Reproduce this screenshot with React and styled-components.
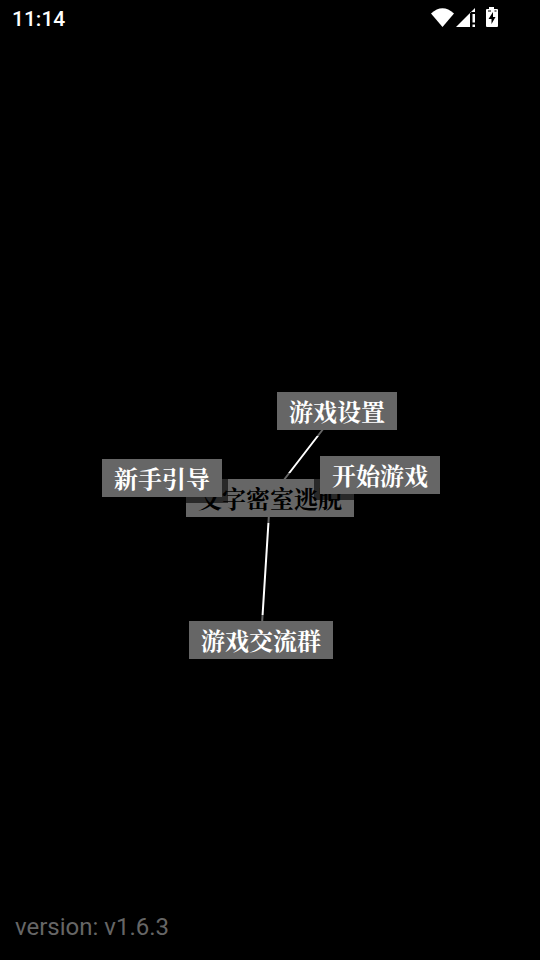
import React from 'react';
import styled, { createGlobalStyle } from 'styled-components';

const GlobalStyle = createGlobalStyle`
    body {
        margin: 0;
        background: #000;
        color: #fff;
        font-family: Roboto, "Noto Sans CJK SC", sans-serif;
    }
`;

const Screen = styled.div`
    min-height: 100vh;
    display: flex;
    flex-direction: column;
`;

const StatusBar = styled.header`
    display: flex;
    align-items: center;
    justify-content: space-between;
    height: 36px;
    padding: 0 40px 0 12px;
`;

const Clock = styled.time`
    padding-top: 2px;
    font-size: 21px;
    font-weight: 500;
    line-height: 36px;
`;

const StatusIcons = styled.svg`
    display: block;
    width: 70px;
    height: 22px;
`;

const Stage = styled.main`
    flex: 1;
    display: flex;
    align-items: center;
    justify-content: center;
    padding-top: 104px;
`;

const NodeMap = styled.div`
    position: relative;
    width: 340px;
    height: 270px;
`;

const Links = styled.svg`
    position: absolute;
    inset: 0;
    width: 100%;
    height: 100%;
`;

const nodeBox = `
    position: absolute;
    box-sizing: border-box;
    height: 38px;
    margin: 0;
    padding: 0 12px;
    border: 0;
    background: #666;
    box-shadow: 0 0 0 6px rgba(0, 0, 0, .6);
    font-family: "Noto Serif CJK SC", "Noto Sans CJK SC", sans-serif;
    font-size: 24px;
    font-weight: 700;
    line-height: 38px;
    white-space: nowrap;
`;

const Title = styled.h1`
    ${nodeBox}
    left: ${({ $x }) => $x}px;
    top: ${({ $y }) => $y}px;
    color: #000;
`;

const NodeButton = styled.button`
    ${nodeBox}
    left: ${({ $x }) => $x}px;
    top: ${({ $y }) => $y}px;
    color: #fff;
    cursor: pointer;
`;

const Version = styled.footer`
    padding: 0 15px 16px;
    color: #666;
    font-size: 24px;
    line-height: 34px;
`;

const nodes = [
    { label: '游戏设置', x: 177, y: 2 },
    { label: '新手引导', x: 2, y: 69 },
    { label: '开始游戏', x: 220, y: 66 },
    { label: '游戏交流群', x: 89, y: 231 },
];

const App = () => (
    <Screen>
        <GlobalStyle />
        <StatusBar>
            <Clock>11:14</Clock>
            <StatusIcons viewBox="0 0 70 22" fill="#fff" aria-hidden="true">
                <path d="M1 6.500Q12.500-4 24 6.500L12.500 20Z" />
                <path d="M26 20 45 1V5H40V20ZM42.500 7H45V15.500H42.500ZM42.500 17.500H45V20H42.500Z" />
                <path fillRule="evenodd" d="M59 0h5v2h3q1 0 1 1v16q0 1-1 1H57q-1 0-1-1V3q0-1 1-1h2ZM63 5 58.500 12H61.500V17L65.500 10H63Z" />
                <path d="M58 4h3M64.500 4h2" stroke="#000" />
            </StatusIcons>
        </StatusBar>
        <Stage>
            <NodeMap>
                <Links viewBox="0 0 340 270" stroke="#fff" strokeWidth="2" aria-hidden="true">
                    <path d="M170 108 237 21M170 108 161 250" />
                </Links>
                <Title $x={86} $y={89}>文字密室逃脱</Title>
                {nodes.map(({ label, x, y }) => (
                    <NodeButton key={label} type="button" $x={x} $y={y}>{label}</NodeButton>
                ))}
            </NodeMap>
        </Stage>
        <Version>version: v1.6.3</Version>
    </Screen>
);

export default App;
